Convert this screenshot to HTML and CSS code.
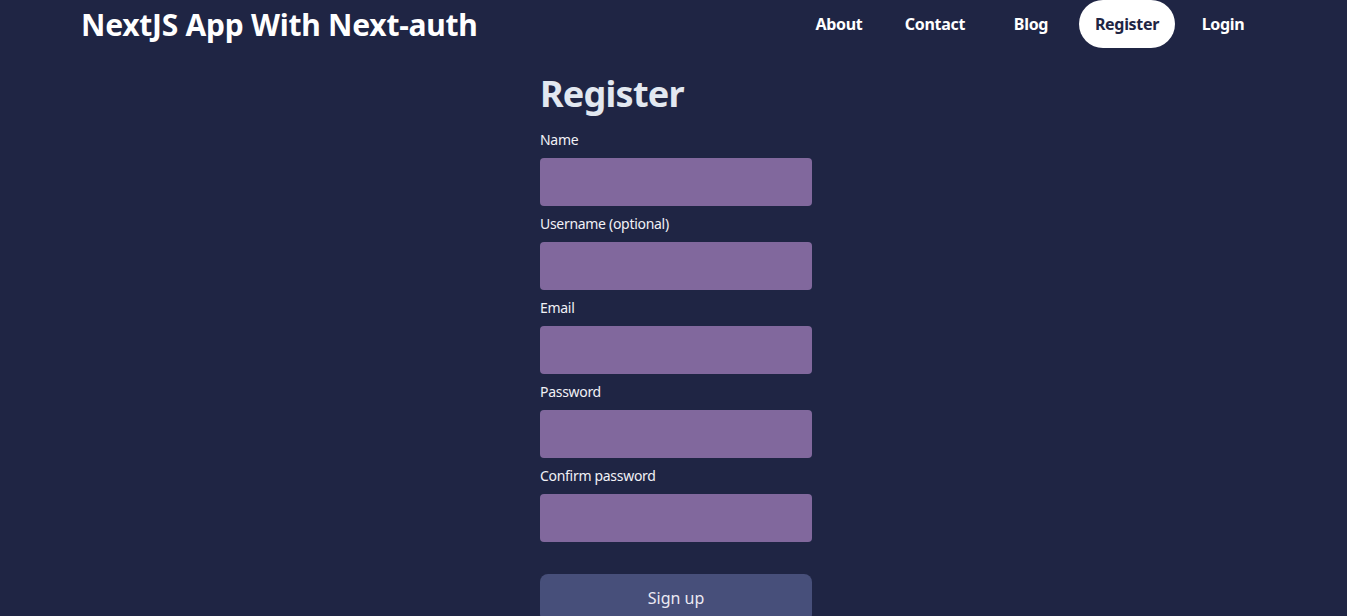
FILE: index.html
```html
<!DOCTYPE html>
<html lang="en">
<head>
<meta charset="utf-8">
<title>NextJS App With Next-auth</title>
<link rel="stylesheet" href="styles.css">
</head>
<body>
<header class="topbar">
  <div class="brand">NextJS App With Next-auth</div>
  <nav class="nav">
    <a class="nav-item" href="#">About</a>
    <a class="nav-item" href="#">Contact</a>
    <a class="nav-item" href="#">Blog</a>
    <a class="nav-item active" href="#">Register</a>
    <a class="nav-item" href="#">Login</a>
  </nav>
</header>
<main class="main">
  <form class="form">
    <h1 class="title">Register</h1>
    <label class="field"><span class="label">Name</span><input class="input" type="text"></label>
    <label class="field"><span class="label">Username (optional)</span><input class="input" type="text"></label>
    <label class="field"><span class="label">Email</span><input class="input" type="email"></label>
    <label class="field"><span class="label">Password</span><input class="input" type="password"></label>
    <label class="field"><span class="label">Confirm password</span><input class="input" type="password"></label>
    <button class="submit" type="button">Sign up</button>
  </form>
</main>
</body>
</html>
```
FILE: styles.css
```css
* { box-sizing: border-box; }
html, body { margin: 0; padding: 0; }
body {
  background: #1f2544;
  color: #ffffff;
  font-family: "Noto Sans", "Open Sans", sans-serif;
  height: 616px;
  overflow: hidden;
}
.topbar {
  display: flex;
  align-items: center;
  justify-content: space-between;
  height: 48px;
  padding: 0 76px 0 81px;
}
.brand {
  font-size: 30px;
  font-weight: 700;
  letter-spacing: -0.25px;
  color: #ffffff;
}
.nav {
  display: flex;
  height: 48px;
}
.nav-item {
  width: 96px;
  height: 48px;
  display: flex;
  align-items: center;
  justify-content: center;
  color: #ffffff;
  text-decoration: none;
  font-size: 16px;
  font-weight: 700;
  letter-spacing: -0.3px;
  border-radius: 24px;
}
.nav-item.active {
  background: #ffffff;
  color: #1f2544;
}
.main {
  display: flex;
  justify-content: center;
  padding-left: 5px;
}
.form {
  width: 272px;
  display: flex;
  flex-direction: column;
  padding-top: 26px;
}
.title {
  margin: 0;
  font-size: 36px;
  line-height: 40px;
  font-weight: 700;
  letter-spacing: -0.75px;
  color: #e2e8f0;
}
.field {
  display: flex;
  flex-direction: column;
  padding-top: 16px;
}
.field + .field { padding-top: 8px; }
.label {
  font-size: 14px;
  line-height: 20px;
  margin-bottom: 8px;
  letter-spacing: -0.3px;
  color: #f1f1f6;
}
.input {
  height: 48px;
  border: none;
  border-radius: 4px;
  background: #81689d;
  outline: none;
}
.submit {
  margin-top: 32px;
  height: 48px;
  border: none;
  border-radius: 8px;
  background: #474f7a;
  color: #eceaf4;
  font-family: inherit;
  font-size: 16px;
}
```
